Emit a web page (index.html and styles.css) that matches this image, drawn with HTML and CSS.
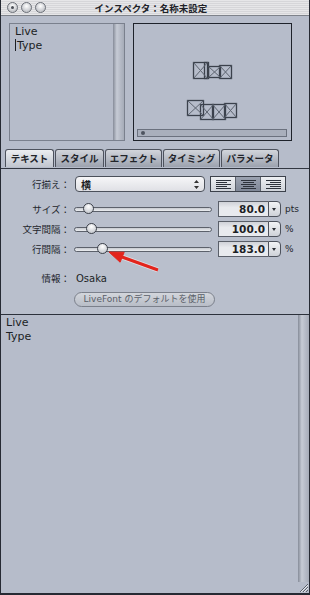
FILE: index.html
```html
<!DOCTYPE html>
<html lang="ja">
<head>
    <meta charset="UTF-8">
    <title>インスペクタ：名称未設定</title>
    <link rel="stylesheet" href="styles.css">
</head>
<body>

<div class="window">
    <!-- Title bar -->
    <div class="titlebar">
        <div class="lights">
            <span class="light dot"></span>
            <span class="light"></span>
            <span class="light"></span>
        </div>
        <div class="title">インスペクタ：名称未設定</div>
    </div>

    <!-- Text list and preview -->
    <div class="top">
        <div class="list">
            <div class="list-text">
                <div>Live</div>
                <div><span class="caret"></span>Type</div>
            </div>
            <div class="vscroll"></div>
        </div>
        <div class="preview">
            <svg class="glyphs" width="157" height="116" viewBox="0 0 157 116">
                <g fill="none" stroke="#3b414c" stroke-width="1.3">
                    <rect x="59.5" y="38.5" width="14" height="16"/>
                    <rect x="70.5" y="38.5" width="4" height="16"/>
                    <rect x="74.5" y="42.5" width="12" height="11"/>
                    <rect x="85.5" y="41.5" width="12" height="13"/>
                    <rect x="53.5" y="76.5" width="16" height="15"/>
                    <rect x="66.5" y="80.5" width="13" height="15"/>
                    <rect x="78.5" y="80.5" width="13" height="15"/>
                    <rect x="90.5" y="79.5" width="12" height="14"/>
                </g>
                <g stroke="#5d6470" stroke-width="1">
                    <path d="M59.5 38.5L73.5 54.5M73.5 38.5L59.5 54.5"/>
                    <path d="M74.5 42.5L86.5 53.5M86.5 42.5L74.5 53.5"/>
                    <path d="M85.5 41.5L97.5 54.5M97.5 41.5L85.5 54.5"/>
                    <path d="M53.5 76.5L69.5 91.5M69.5 76.5L53.5 91.5"/>
                    <path d="M66.5 80.5L79.5 95.5M79.5 80.5L66.5 95.5"/>
                    <path d="M78.5 80.5L91.5 95.5M91.5 80.5L78.5 95.5"/>
                    <path d="M90.5 79.5L102.5 93.5M102.5 79.5L90.5 93.5"/>
                </g>
            </svg>
            <div class="hscroll"><span class="hdot"></span></div>
        </div>
    </div>

    <!-- Tabs -->
    <div class="tabs">
        <div class="tab active t1">テキスト</div>
        <div class="tab t2">スタイル</div>
        <div class="tab t3">エフェクト</div>
        <div class="tab t4">タイミング</div>
        <div class="tab t5">パラメータ</div>
    </div>

    <!-- Text settings -->
    <div class="panel">
        <div class="row row-align">
            <div class="label">行揃え：</div>
            <div class="popup">
                <span>横</span>
                <svg width="5" height="9" viewBox="0 0 5 9"><path d="M2.5 0L5 3H0Z M2.5 9L5 6H0Z" fill="#333"/></svg>
            </div>
            <div class="segments">
                <div class="seg">
                    <svg width="15" height="9" viewBox="0 0 15 9"><path d="M0 .5H15M0 2.5H11M0 4.5H15M0 6.5H11M0 8.5H15" stroke="#2d323b"/></svg>
                </div>
                <div class="seg on">
                    <svg width="15" height="9" viewBox="0 0 15 9"><path d="M0 .5H15M2 2.5H13M0 4.5H15M2 6.5H13M0 8.5H15" stroke="#2d323b"/></svg>
                </div>
                <div class="seg">
                    <svg width="15" height="9" viewBox="0 0 15 9"><path d="M0 .5H15M4 2.5H15M0 4.5H15M4 6.5H15M0 8.5H15" stroke="#2d323b"/></svg>
                </div>
            </div>
        </div>

        <div class="sliders">
            <div class="row">
                <div class="label">サイズ：</div>
                <div class="track"><span class="thumb" style="left: 8px"></span></div>
                <div class="field"><span class="value">80.0</span><span class="drop"></span></div>
                <div class="unit">pts</div>
            </div>
            <div class="row">
                <div class="label">文字間隔：</div>
                <div class="track"><span class="thumb" style="left: 11px"></span></div>
                <div class="field"><span class="value">100.0</span><span class="drop"></span></div>
                <div class="unit">%</div>
            </div>
            <div class="row">
                <div class="label">行間隔：</div>
                <div class="track"><span class="thumb" style="left: 22px"></span></div>
                <div class="field"><span class="value">183.0</span><span class="drop"></span></div>
                <div class="unit">%</div>
            </div>
        </div>

        <div class="row row-info">
            <div class="label">情報：</div>
            <div class="info">Osaka</div>
        </div>

        <div class="row row-btn">
            <div class="pill">LiveFont のデフォルトを使用</div>
        </div>

        <svg class="arrow" width="70" height="36" viewBox="0 0 70 36">
            <path d="M62 27L26 14" stroke="#ffffff" stroke-opacity="0.5" stroke-width="5"/>
            <path d="M62 27L26 14" stroke="#e3241c" stroke-width="3"/>
            <path d="M13 9L28.2 9.2L24.1 19.2Z" fill="#e3241c" stroke="#e3241c" stroke-width="1" stroke-linejoin="round"/>
        </svg>
    </div>

    <!-- Editor -->
    <div class="editor">
        <div class="editor-text">
            <div>Live</div>
            <div>Type</div>
        </div>
        <div class="editor-scroll">
            <div class="vscroll"></div>
            <svg class="grip" width="11" height="11" viewBox="0 0 11 11">
                <path d="M10 2L2 10M10 5L5 10M10 8L8 10" stroke="#59606b" stroke-width="1"/>
                <path d="M10 3L3 10M10 6L6 10" stroke="#e6e8ec" stroke-width="1"/>
            </svg>
        </div>
    </div>
</div>

</body>
</html>
```

FILE: styles.css
```css
/* Basic Styles */
body {
    margin: 0;
    padding: 0;
    background-color: #b6bcca;
    font-family: "DejaVu Sans", "Noto Sans CJK JP", sans-serif;
    color: #1c1f25;
}

.window {
    position: relative;
    width: 310px;
    height: 595px;
    box-sizing: border-box;
    border: 1px solid #262a33;
    border-top: none;
    border-bottom-width: 2px;
    background-color: #b6bcca;
    display: flex;
    flex-direction: column;
    overflow: hidden;
}

/* Title bar */
.titlebar {
    height: 15px;
    flex-shrink: 0;
    border-bottom: 1px solid #7e828a;
    background: repeating-linear-gradient(#e6e6e8 0, #e6e6e8 1px, #d6d6d9 1px, #d6d6d9 2px);
    display: flex;
    align-items: center;
    position: relative;
}

.lights {
    display: flex;
    gap: 3px;
    padding-left: 6px;
}

.light {
    width: 9px;
    height: 9px;
    border-radius: 50%;
    border: 1px solid #6c7078;
    background: radial-gradient(circle at 50% 35%, #ffffff, #c4c6cb 70%);
    position: relative;
}

.light.dot::after {
    content: "";
    position: absolute;
    left: 3px;
    top: 3px;
    width: 3px;
    height: 3px;
    border-radius: 50%;
    background-color: #4a4e56;
}

.title {
    position: absolute;
    left: 0;
    right: 0;
    text-align: center;
    padding-right: 8px;
    font-family: "Noto Sans CJK JP", sans-serif;
    font-size: 9.5px;
    font-weight: bold;
    color: #202228;
}

/* Top area */
.top {
    height: 132px;
    flex-shrink: 0;
    box-sizing: border-box;
    padding: 7px 0 0 8px;
    display: flex;
    gap: 8px;
}

.list {
    width: 116px;
    height: 118px;
    box-sizing: border-box;
    border: 1px solid #7a808d;
    display: flex;
}

.list-text {
    flex: 1;
    padding: 1px 0 0 5px;
    font-size: 11px;
    line-height: 14px;
}

.caret {
    display: inline-block;
    width: 0;
    height: 12px;
    border-left: 1px solid #1c1f25;
    vertical-align: -2px;
    margin-right: 1px;
}

.vscroll {
    width: 11px;
    background: linear-gradient(90deg, #868c99, #c6cbd5 35%, #b4b9c5 70%, #a6acb8);
}

.preview {
    position: relative;
    width: 159px;
    height: 118px;
    box-sizing: border-box;
    border: 1px solid #1e222a;
}

.glyphs {
    position: absolute;
    left: 0;
    top: 0;
}

.hscroll {
    position: absolute;
    left: 3px;
    top: 105px;
    width: 150px;
    height: 8px;
    box-sizing: border-box;
    border: 1px solid #6b717e;
    background-color: #a9afbc;
}

.hdot {
    position: absolute;
    left: 3px;
    top: 1px;
    width: 4px;
    height: 4px;
    border-radius: 50%;
    background-color: #4e5460;
}

/* Tabs */
.tabs {
    height: 21px;
    flex-shrink: 0;
    box-sizing: border-box;
    padding: 1px 0 0 4px;
    display: flex;
    gap: 1px;
    border-bottom: 1px solid #323741;
}

.tab {
    height: 18px;
    box-sizing: border-box;
    border: 1px solid #4d525d;
    border-bottom: none;
    border-radius: 3px 3px 0 0;
    background: linear-gradient(#d2d5db, #b1b6c0 60%, #9ca2ae);
    font-family: "Noto Sans CJK JP", sans-serif;
    font-size: 9.5px;
    font-weight: bold;
    line-height: 17px;
    text-align: center;
    color: #22252b;
}

.tab.active {
    background: linear-gradient(#eceef1, #d1d5dc 60%, #c0c5ce);
}

.t1 { width: 49px; }
.t2 { width: 49px; }
.t3 { width: 57px; }
.t4 { width: 57px; }
.t5 { width: 58px; }

/* Text settings panel */
.panel {
    position: relative;
    height: 145px;
    flex-shrink: 0;
    box-sizing: border-box;
    padding-top: 7px;
    background-color: #b9bfcc;
}

.row {
    display: flex;
    align-items: center;
    height: 16px;
}

.label {
    width: 69px;
    flex-shrink: 0;
    text-align: right;
    font-family: "Noto Sans CJK JP", sans-serif;
    font-size: 9.5px;
    color: #23262d;
}

.row-align {
    margin-bottom: 9px;
}

.popup {
    margin-left: 5px;
    width: 130px;
    height: 16px;
    box-sizing: border-box;
    border: 1px solid #4b505a;
    border-radius: 4px;
    background: linear-gradient(#f6f6f8, #dfe0e5);
    display: flex;
    align-items: center;
    justify-content: space-between;
    padding: 0 5px 0 5px;
    font-family: "Noto Sans CJK JP", sans-serif;
    font-size: 10px;
    font-weight: bold;
}

.segments {
    margin-left: 5px;
    width: 76px;
    height: 16px;
    box-sizing: border-box;
    border: 1px solid #3c414b;
    display: flex;
}

.seg {
    flex: 1;
    display: flex;
    align-items: center;
    justify-content: center;
    border-left: 1px solid #5b616c;
    background: linear-gradient(#eef0f3, #cfd3da);
}

.seg:first-child {
    border-left: none;
}

.seg.on {
    background: linear-gradient(#9ba2b0, #7f8797);
}

.sliders {
    display: flex;
    flex-direction: column;
    gap: 4px;
}

.track {
    position: relative;
    margin-left: 4px;
    width: 138px;
    height: 5px;
    box-sizing: border-box;
    border: 1px solid #5c616b;
    border-radius: 3px;
    background: linear-gradient(#c7cad0, #eceef1);
}

.thumb {
    position: absolute;
    top: -5px;
    width: 11px;
    height: 11px;
    box-sizing: border-box;
    border: 1.5px solid #3c414a;
    border-radius: 50%;
    background: radial-gradient(circle at 50% 30%, #ffffff, #c9ccd2 75%);
}

.field {
    margin-left: 6px;
    width: 63px;
    height: 16px;
    box-sizing: border-box;
    display: flex;
}

.value {
    flex: 1;
    border: 1px solid #5a5f69;
    border-right: none;
    background: linear-gradient(#cfd2d8, #e8eaee 40%);
    font-size: 10.5px;
    font-weight: bold;
    line-height: 14px;
    text-align: right;
    padding-right: 3px;
}

.drop {
    position: relative;
    width: 11px;
    border: 1px solid #4d525c;
    border-radius: 0 4px 4px 0;
    background: linear-gradient(#f2f3f5, #cfd2d8);
}

.drop::after {
    content: "";
    position: absolute;
    left: 3px;
    top: 6px;
    border-left: 2.5px solid transparent;
    border-right: 2.5px solid transparent;
    border-top: 3px solid #2a2e35;
}

.unit {
    margin-left: 4px;
    font-size: 9px;
    color: #23262d;
}

.row-info {
    margin-top: 13px;
}

.info {
    margin-left: 6px;
    font-size: 10px;
}

.row-btn {
    margin-top: 6px;
    height: 15px;
}

.pill {
    margin-left: 73px;
    width: 141px;
    height: 15px;
    box-sizing: border-box;
    border: 1px solid #7b808b;
    border-radius: 8px;
    background: linear-gradient(#d3d6dc, #b8bdc7);
    font-family: "DejaVu Sans", "Noto Sans CJK JP", sans-serif;
    font-size: 9px;
    line-height: 13px;
    text-align: center;
    color: #5a5f69;
}

.arrow {
    position: absolute;
    left: 95px;
    top: 74px;
}

/* Editor */
.editor {
    flex: 1;
    display: flex;
    border-top: 1px solid #2c313b;
}

.editor-text {
    flex: 1;
    padding: 1px 0 0 5px;
    font-size: 11px;
    line-height: 14px;
}

.editor-scroll {
    width: 11px;
    display: flex;
    flex-direction: column;
}

.editor-scroll .vscroll {
    flex: 1;
}

.grip {
    display: block;
}
```
